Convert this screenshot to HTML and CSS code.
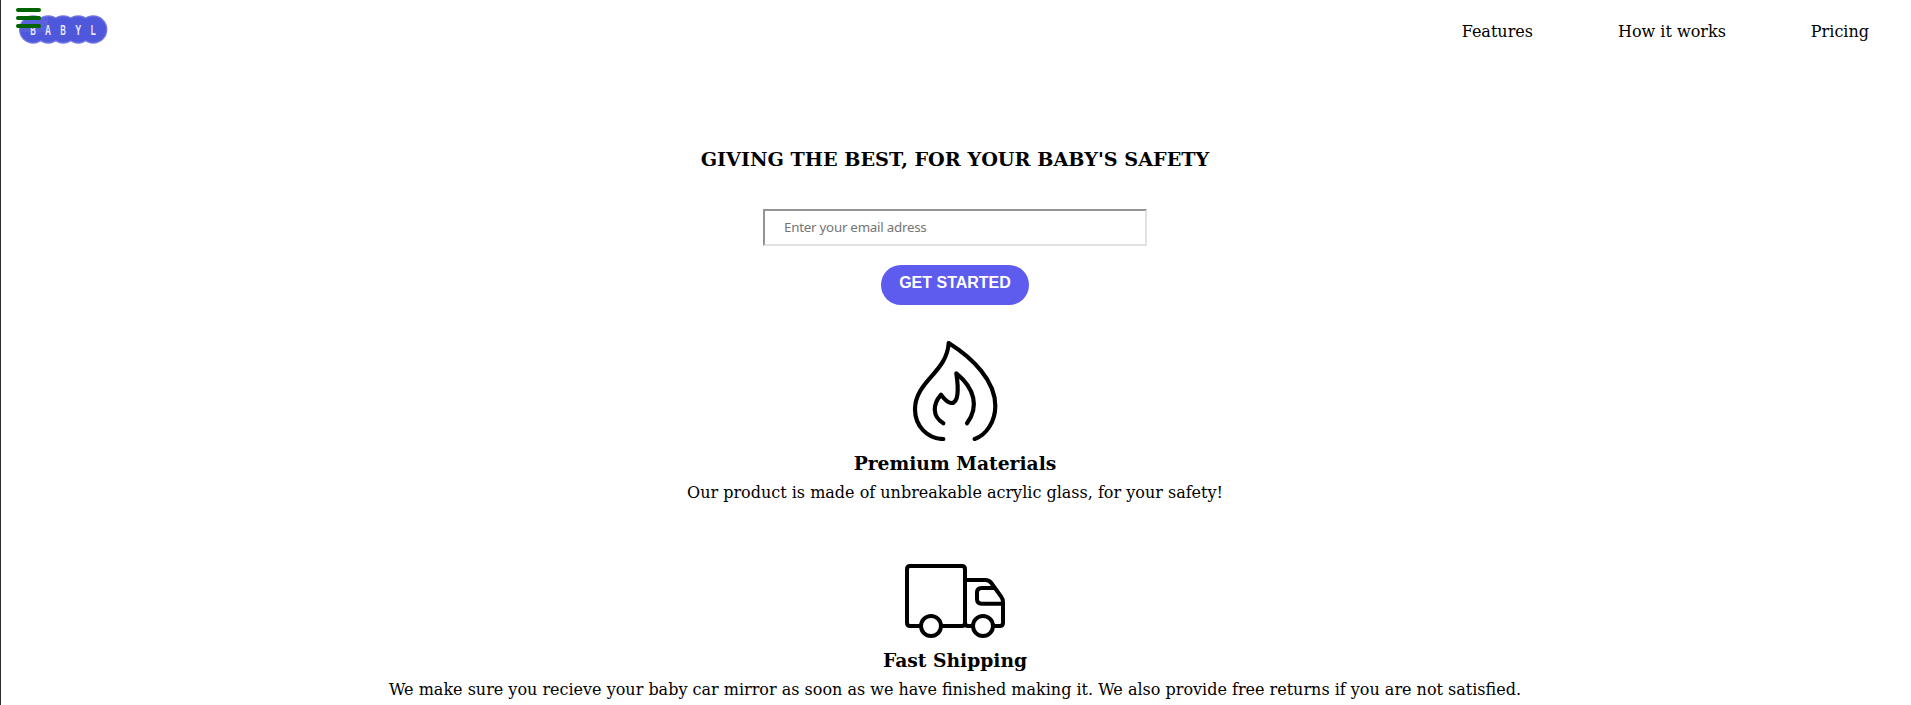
FILE: index.html
```html
<!DOCTYPE html>
<html lang="en">
<head>
<meta charset="utf-8">
<title>Babyl</title>
<link rel="stylesheet" href="styles.css">
</head>
<body>
<header class="header">
  <div class="logo">
    <svg class="logo-shape" viewBox="0 0 89 29" aria-hidden="true">
      <g fill="#7479e6"><circle cx="14.1" cy="14.5" r="14.2"/><circle cx="29.2" cy="14.5" r="14.2"/><circle cx="44.2" cy="14.5" r="14.2"/><circle cx="59.2" cy="14.5" r="14.2"/><circle cx="74.2" cy="14.5" r="14.2"/></g>
      <g fill="#4f57da"><circle cx="14.1" cy="14.5" r="12.9"/><circle cx="29.2" cy="14.5" r="12.9"/><circle cx="44.2" cy="14.5" r="12.9"/><circle cx="59.2" cy="14.5" r="12.9"/><circle cx="74.2" cy="14.5" r="12.9"/></g>
      <g class="logo-text"><text x="11.3" y="19.6" textLength="5.6" lengthAdjust="spacingAndGlyphs">B</text><text x="26" y="19.6" textLength="6" lengthAdjust="spacingAndGlyphs">A</text><text x="41.3" y="19.6" textLength="5.6" lengthAdjust="spacingAndGlyphs">B</text><text x="56.2" y="19.6" textLength="6" lengthAdjust="spacingAndGlyphs">Y</text><text x="71.7" y="19.6" textLength="5" lengthAdjust="spacingAndGlyphs">L</text></g>
    </svg>
    <div class="menu"><span class="menu-bar"></span><span class="menu-bar"></span><span class="menu-bar"></span></div>
  </div>
  <nav class="nav"><a>Features</a><a>How it works</a><a>Pricing</a></nav>
</header>
<main class="main">
  <h1 class="headline">GIVING THE BEST, FOR YOUR BABY'S SAFETY</h1>
  <form class="signup">
    <input class="email" type="email" placeholder="Enter your email adress">
    <button class="submit" type="button">GET STARTED</button>
  </form>
  <section class="feature">
    <svg class="icon-fire" viewBox="45 33 300 300" fill="none" stroke="#000" stroke-width="12.5" stroke-linecap="round" stroke-linejoin="round">
      <path d="M160 327C112 327 75 288 75 238C75 154 171 128 176 39C248 84 316 152 316 228C316 274 289 315 254 327"/>
      <path d="M160 280C127 259 127 225 153 194C166 211 175 219 184 219C206 219 206 176 199 130C254 175 268 230 231 280"/>
    </svg>
    <h2 class="title">Premium Materials</h2>
    <p class="text">Our product is made of unbreakable acrylic glass, for your safety!</p>
  </section>
  <section class="feature">
    <svg class="icon-truck" viewBox="45 42 300 222" fill="none" stroke="#000" stroke-width="12" stroke-linejoin="round">
      <path d="M94 228H61Q51 228 51 218V58Q51 48 61 48H215Q225 48 225 58V218Q225 228 215 228H153"/>
      <path d="M225 90H286Q297 90 304 99L333 139Q339 147 339 157V218Q339 228 329 228H309M248 228H235Q225 228 225 218M314 114H275Q261 114 261 128V147Q261 161 275 161H339"/>
      <circle cx="123" cy="228" r="30"/><circle cx="279" cy="228" r="30"/>
    </svg>
    <h2 class="title">Fast Shipping</h2>
    <p class="text">We make sure you recieve your baby car mirror as soon as we have finished making it. We also provide free returns if you are not satisfied.</p>
  </section>
</main>
</body>
</html>
```
FILE: styles.css
```css
* { box-sizing: border-box; }
body {
  margin: 0;
  height: 705px;
  overflow: hidden;
  border-left: 1px solid #2b2b2b;
  background: #fff;
  color: #000;
  font-family: "DejaVu Serif", serif;
  font-size: 16px;
}
.header { display: flex; justify-content: space-between; height: 62px; padding: 15px 42px 0 18px; }
.logo { position: relative; width: 89px; height: 29px; }
.logo-shape { display: block; width: 89px; height: 29px; }
.logo-text { fill: #e9eaff; font: bold 14px "Liberation Sans", sans-serif; }
.menu { position: absolute; left: -3px; top: -7px; display: grid; gap: 4px; width: 32px; padding-bottom: 4px; background: rgba(255, 255, 255, .06); }
.menu-bar { width: 25px; height: 4px; border-radius: 2px; background: #006400; }
.nav { display: flex; gap: 85px; padding-top: 7px; line-height: 19px; }
.main { display: flex; flex-direction: column; align-items: center; padding-right: 2px; }
.headline { margin: 86px 0 0; font-size: 19.2px; line-height: 24px; }
.signup { display: flex; flex-direction: column; align-items: center; gap: 19px; margin-top: 37px; }
.email {
  width: 384px;
  height: 37px;
  padding: 0 19px 2px;
  border: 2px solid;
  border-color: #949494 #e2e2e2 #e2e2e2 #949494;
  font: 13.33px "Noto Sans", sans-serif;
  letter-spacing: -.24px;
}
.email::placeholder { color: #757575; }
.submit {
  width: 148px;
  height: 40px;
  padding: 0 0 5px;
  border: 0;
  border-radius: 20px;
  background: #5e5cee;
  color: #fff;
  font: bold 16px "Liberation Sans", sans-serif;
}
.feature { display: flex; flex-direction: column; align-items: center; margin-top: 36px; }
.feature + .feature { margin-top: 62px; }
.icon-fire { width: 100px; height: 100px; }
.icon-truck { width: 100px; height: 74px; }
.title { margin: 11px 0 0; font-size: 18.72px; line-height: 22px; }
.text { margin: 9px 0 0; line-height: 19px; }
```
